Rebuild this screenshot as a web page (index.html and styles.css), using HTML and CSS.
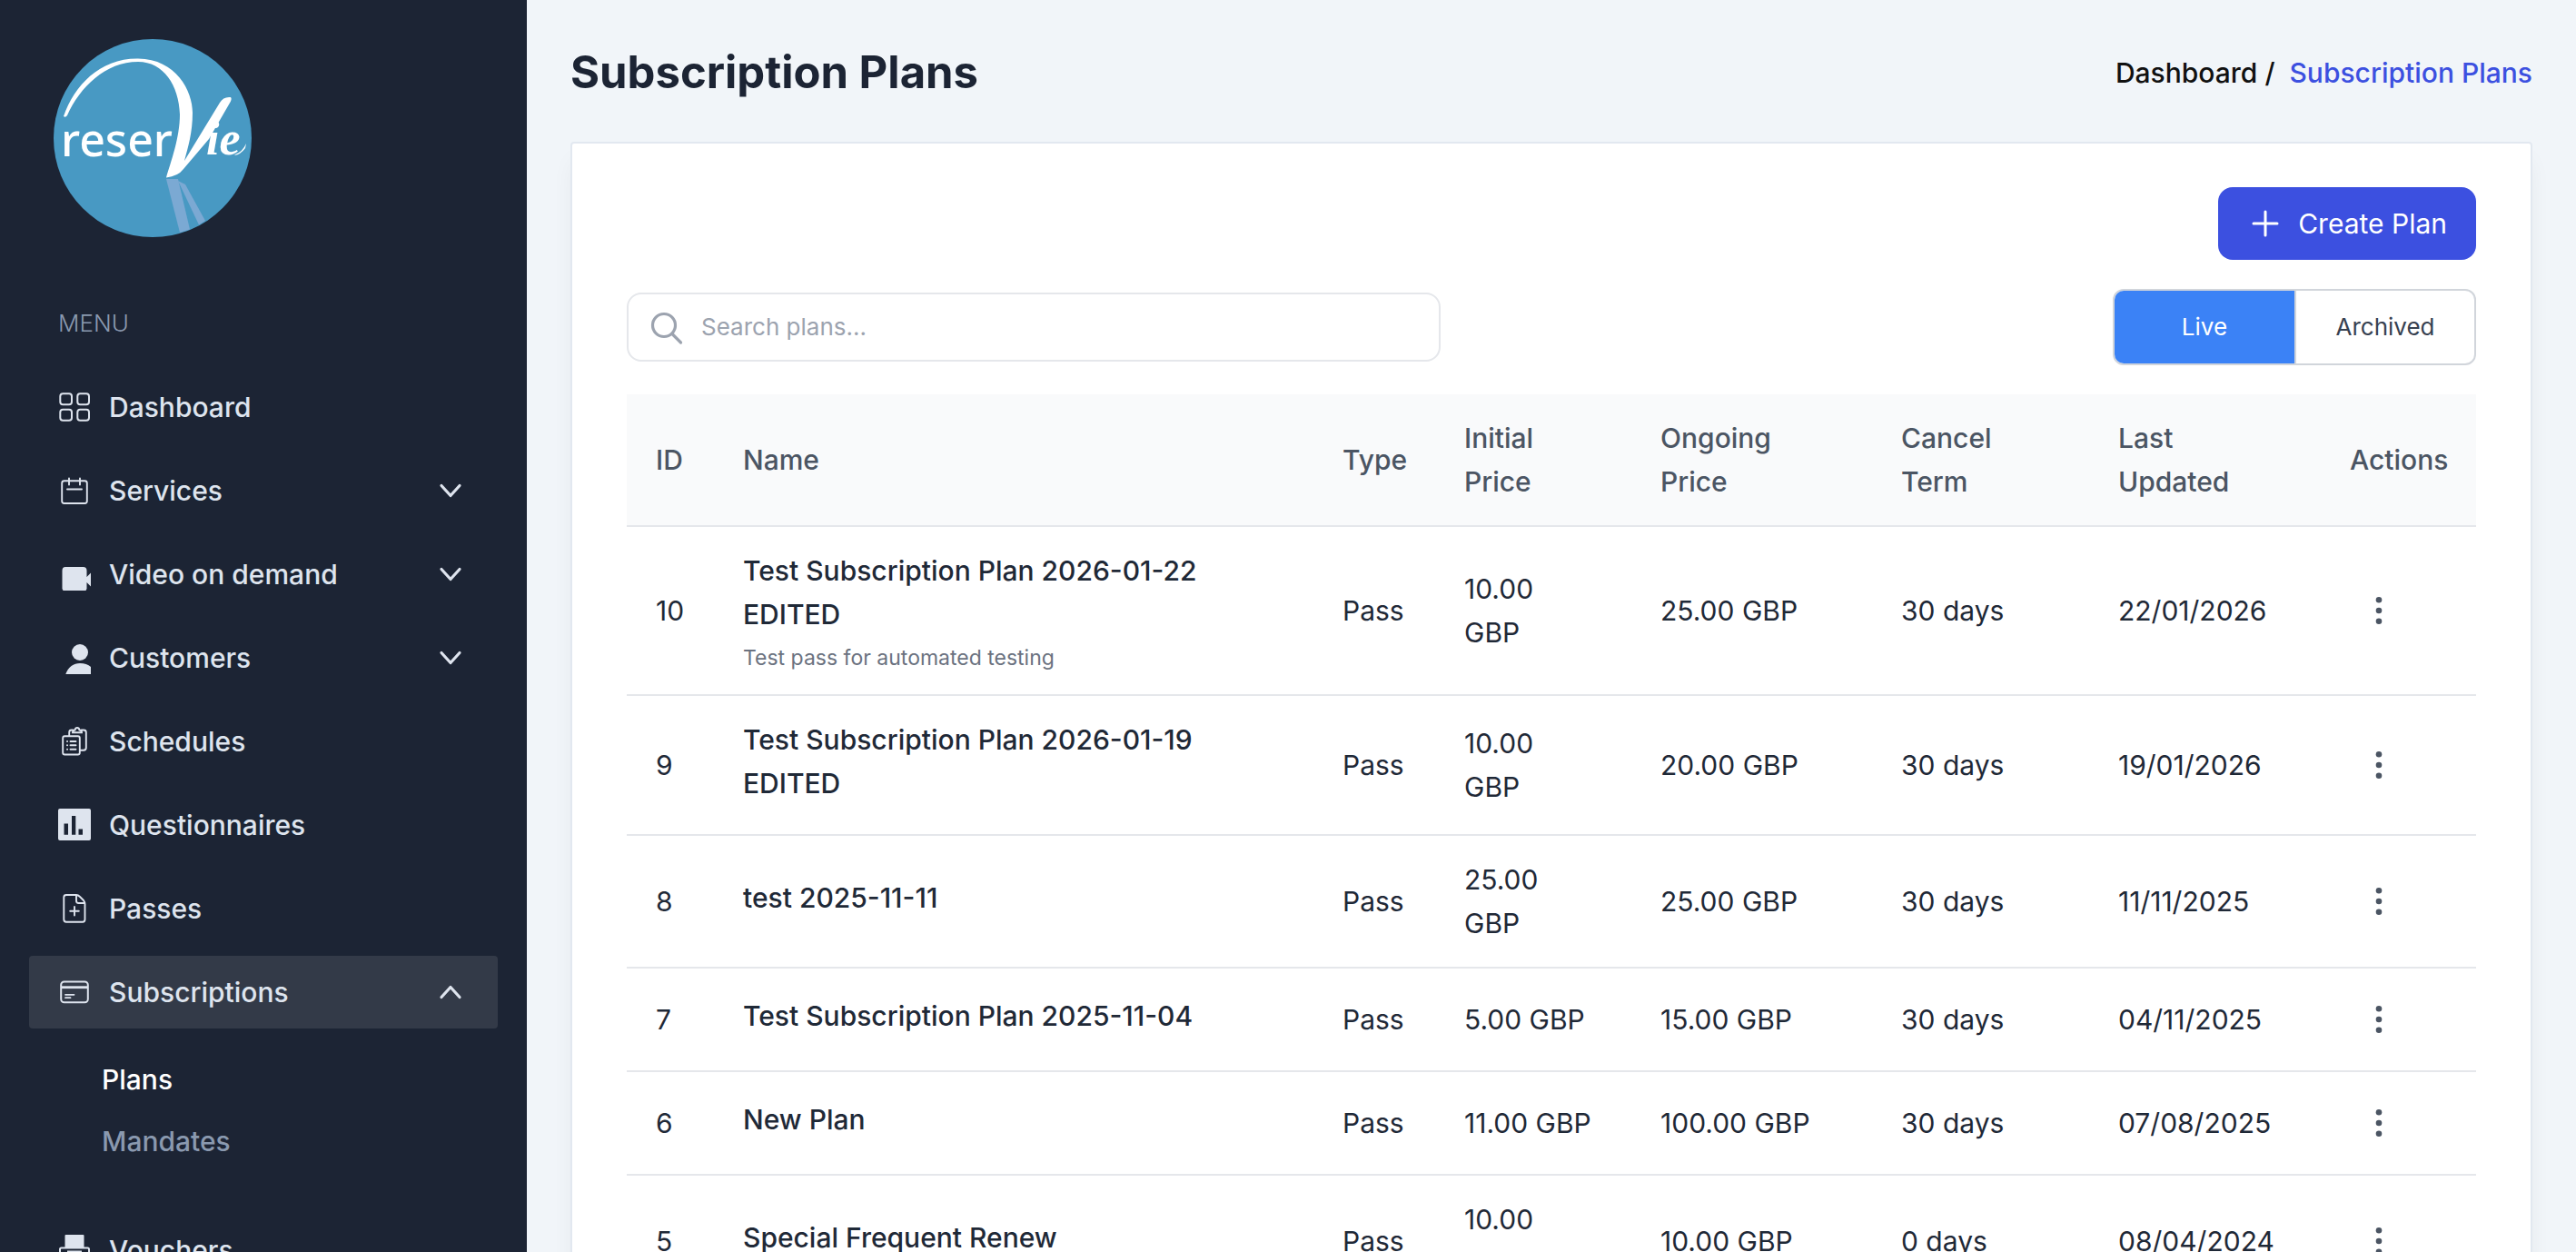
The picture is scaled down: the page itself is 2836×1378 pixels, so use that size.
FILE: index.html
```html
<!DOCTYPE html>
<html lang="en">
<head>
<meta charset="utf-8">
<meta name="viewport" content="width=device-width, initial-scale=1">
<title>Subscription Plans</title>
<link rel="stylesheet" href="styles.css">
</head>
<body>
<svg class="defs" aria-hidden="true">
  <symbol id="chevron" viewBox="0 0 40 40"><path d="M10 14.5 20 25.500 30 14.500" fill="none" stroke="currentColor" stroke-width="3.2" stroke-linecap="round" stroke-linejoin="round"/></symbol>
  <symbol id="dots" viewBox="0 0 40 40"><g fill="currentColor"><circle cx="20" cy="8.300" r="3.300"/><circle cx="20" cy="20" r="3.300"/><circle cx="20" cy="31.700" r="3.300"/></g></symbol>
</svg>
<div class="app">
  <aside class="sidebar">
    <a class="logo" href="#" aria-label="reserVie home">
      <svg viewBox="0 0 224 224">
        <circle cx="112" cy="112" r="109" fill="#4899c3"/>
        <g fill="#7ba9d3">
          <path d="M127 157h13l13 55.500-11 3.500z"/>
          <path d="M140 159l8 4 22 40-7 4.500z"/>
        </g>
        <g fill="#fff">
          <path d="M14 88C26 54 54 24 96 24.500C138 25 156 60 156 84C156 106 151 122 147 137L186 73Q190 66 198 67Q200 69 196 75L174 113L146 146Q140 154 127 155.500C132 138 142 112 142 86C141 54 124 28 96 28C60 28 32 56 18 87Q16 90 14 88Z"/>
          <text class="logo-sans" x="11" y="132">reser</text>
          <text class="logo-script" x="171" y="130">ie</text>
          <path d="M203 130q8-3 12-12l-1 5q-5 7-12 8z"/>
        </g>
      </svg>
    </a>
    <nav class="nav" aria-label="Main">
      <h2 class="nav-heading">MENU</h2>
      <ul class="nav-list">
        <li><a class="nav-item" href="#">
          <svg class="nav-icon" viewBox="0 0 36 36" fill="none" stroke="currentColor" stroke-width="2"><rect x="2.300" y="3.300" width="12.700" height="12" rx="3"/><rect x="21.300" y="3.300" width="12.700" height="12" rx="3"/><rect x="2.300" y="20.700" width="12.700" height="12" rx="3"/><rect x="21.300" y="20.700" width="12.700" height="12" rx="3"/></svg>
          Dashboard</a></li>
        <li><button class="nav-item" type="button">
          <svg class="nav-icon" viewBox="0 0 36 36" fill="none" stroke="currentColor" stroke-width="1.900" stroke-linecap="round"><rect x="4.200" y="7.200" width="27.600" height="24.800" rx="2.500"/><path d="M12 4.500v7M24 4.500v7M10 16.500h16"/></svg>
          Services<svg class="nav-chevron"><use href="#chevron"/></svg></button></li>
        <li><button class="nav-item" type="button">
          <svg class="nav-icon" viewBox="0 0 36 36" fill="currentColor"><path d="M8 10h19.500q4 0 4 4v7l5-5v16l-5-5v7l-1 2h-25l-1-2V14q0-4 3.500-4z"/></svg>
          Video on demand<svg class="nav-chevron"><use href="#chevron"/></svg></button></li>
        <li><button class="nav-item" type="button">
          <svg class="nav-icon" viewBox="0 0 36 36" fill="currentColor"><circle cx="24" cy="12" r="9"/><path d="M8.300 36C11 28 17 24 24 24c5 0 9 1.500 12 4v8z"/></svg>
          Customers<svg class="nav-chevron"><use href="#chevron"/></svg></button></li>
        <li><a class="nav-item" href="#">
          <svg class="nav-icon" viewBox="0 0 36 36" fill="none" stroke="currentColor" stroke-width="1.900" stroke-linecap="round"><rect x="5.200" y="12.200" width="18.600" height="20.300" rx="2"/><path d="M12.200 12V8q0-2.500 2.500-2.500h1.500M25.500 5.500H28q2.800 0 2.800 2.500v17q0 2.700-2.800 2.700h-4M16 8.300q0-2.800 2.500-2.800Q19 3 21 3t2.500 2.500Q26 5.500 26 8.300z"/><path d="M13.500 18h6M13.500 22.300h6M13.500 26.700h6M10 18h.1M10 22.300h.1M10 26.700h.1"/></svg>
          Schedules</a></li>
        <li><a class="nav-item" href="#">
          <svg class="nav-icon" viewBox="0 0 36 36" fill="currentColor" fill-rule="evenodd"><path d="M2 0h32q2 0 2 2v31q0 2-2 2H2q-2 0-2-2V2q0-2 2-2zM6.500 16.500v12.200H11V16.500zM15 8v20.700h4.300V8zM22.500 22.500v6.200H27v-6.200z"/></svg>
          Questionnaires</a></li>
        <li><a class="nav-item" href="#">
          <svg class="nav-icon" viewBox="0 0 36 36" fill="none" stroke="currentColor" stroke-width="1.900" stroke-linecap="round" stroke-linejoin="round"><path d="M9 3h11q2 0 4 2l4 4q1.500 2 1.500 4v17q0 2.700-2.500 2.700H9Q6.300 32.700 6.300 30V5.500Q6.300 3 9 3zM20 3.500v6q0 2.500 2.500 2.500h6.500M18 16v9.500M13.200 20.700h9.600"/></svg>
          Passes</a></li>
        <li><button class="nav-item is-active" type="button" aria-expanded="true">
          <svg class="nav-icon" viewBox="0 0 36 36" fill="none" stroke="currentColor" stroke-width="2" stroke-linecap="round"><rect x="3.200" y="6.400" width="29.600" height="22.800" rx="3.500"/><path d="M4 12.700h28" stroke-width="2.800" stroke-linecap="butt"/><path d="M8 20.800h9.500M8 24.200h5.500" stroke-width="1.800"/></svg>
          Subscriptions<svg class="nav-chevron is-open"><use href="#chevron"/></svg></button>
          <ul class="subnav">
            <li><a class="subnav-link is-current" href="#" aria-current="page">Plans</a></li>
            <li><a class="subnav-link" href="#">Mandates</a></li>
          </ul>
        </li>
        <li><a class="nav-item" href="#">
          <svg class="nav-icon" viewBox="0 0 36 36"><path d="M8.500 1h19q1 0 1 1v13h-21V2q0-1 1-1z" fill="currentColor"/><rect x="2" y="15.500" width="32" height="12" rx="1.500" fill="none" stroke="currentColor" stroke-width="2"/><path d="M10 18.500h16V34H10z" fill="currentColor"/></svg>
          Vouchers</a></li>
      </ul>
    </nav>
  </aside>
  <main class="main">
    <header class="page-header">
      <h1 class="page-title">Subscription Plans</h1>
      <nav class="breadcrumb" aria-label="Breadcrumb">
        <a href="#">Dashboard /</a>
        <a class="is-current" href="#" aria-current="page">Subscription Plans</a>
      </nav>
    </header>
    <section class="card">
      <div class="actions-row">
        <button class="create" type="button">
          <svg class="icon" viewBox="0 0 40 40" fill="none" stroke="currentColor" stroke-width="3" stroke-linecap="round"><path d="M20 7v26M7 20h26"/></svg>
          Create Plan
        </button>
      </div>
      <div class="filter-row">
        <label class="search">
          <svg class="icon" viewBox="0 0 40 40" fill="none" stroke="currentColor" stroke-width="3.200" stroke-linecap="round"><circle cx="15" cy="18" r="12.500"/><path d="M24 27.500l9.500 9.500"/></svg>
          <input type="text" placeholder="Search plans..." aria-label="Search plans">
        </label>
        <div class="toggle" role="group" aria-label="Plan status">
          <button class="toggle-option is-selected" type="button" aria-pressed="true">Live</button>
          <button class="toggle-option" type="button" aria-pressed="false">Archived</button>
        </div>
      </div>
      <table class="plans">
        <colgroup><col class="c-id"><col><col class="c-type"><col class="c-initial"><col class="c-ongoing"><col class="c-term"><col class="c-updated"><col class="c-actions"></colgroup>
        <thead>
          <tr><th>ID</th><th>Name</th><th>Type</th><th>Initial<br>Price</th><th>Ongoing<br>Price</th><th>Cancel<br>Term</th><th>Last<br>Updated</th><th>Actions</th></tr>
        </thead>
        <tbody>
          <tr><td>10</td><td><h3 class="plan-name">Test Subscription Plan 2026-01-22 EDITED</h3><p class="plan-note">Test pass for automated testing</p></td><td>Pass</td><td>10.00<br>GBP</td><td>25.00 GBP</td><td>30 days</td><td>22/01/2026</td><td><button class="menu" type="button" aria-label="Actions for plan 10"><svg class="icon"><use href="#dots"/></svg></button></td></tr>
          <tr><td>9</td><td><h3 class="plan-name">Test Subscription Plan 2026-01-19 EDITED</h3><p class="plan-note"></p></td><td>Pass</td><td>10.00<br>GBP</td><td>20.00 GBP</td><td>30 days</td><td>19/01/2026</td><td><button class="menu" type="button" aria-label="Actions for plan 9"><svg class="icon"><use href="#dots"/></svg></button></td></tr>
          <tr><td>8</td><td><h3 class="plan-name">test 2025-11-11</h3><p class="plan-note"></p></td><td>Pass</td><td>25.00<br>GBP</td><td>25.00 GBP</td><td>30 days</td><td>11/11/2025</td><td><button class="menu" type="button" aria-label="Actions for plan 8"><svg class="icon"><use href="#dots"/></svg></button></td></tr>
          <tr><td>7</td><td><h3 class="plan-name">Test Subscription Plan 2025-11-04</h3><p class="plan-note"></p></td><td>Pass</td><td>5.00 GBP</td><td>15.00 GBP</td><td>30 days</td><td>04/11/2025</td><td><button class="menu" type="button" aria-label="Actions for plan 7"><svg class="icon"><use href="#dots"/></svg></button></td></tr>
          <tr><td>6</td><td><h3 class="plan-name">New Plan</h3><p class="plan-note"></p></td><td>Pass</td><td>11.00 GBP</td><td>100.00 GBP</td><td>30 days</td><td>07/08/2025</td><td><button class="menu" type="button" aria-label="Actions for plan 6"><svg class="icon"><use href="#dots"/></svg></button></td></tr>
          <tr><td>5</td><td><h3 class="plan-name">Special Frequent Renew</h3><p class="plan-note"></p></td><td>Pass</td><td>10.00<br>GBP</td><td>10.00 GBP</td><td>0 days</td><td>08/04/2024</td><td><button class="menu" type="button" aria-label="Actions for plan 5"><svg class="icon"><use href="#dots"/></svg></button></td></tr>
        </tbody>
      </table>
    </section>
  </main>
</div>
</body>
</html>
```
FILE: styles.css
```css
* { box-sizing: border-box; margin: 0; padding: 0; }

body {
  font: 400 30px/48px Inter, "Liberation Sans", sans-serif;
  color: #1f2937;
  background: #f1f5f9;
}

button, input { font: inherit; color: inherit; background: none; border: 0; }
a { color: inherit; text-decoration: none; }
ul { list-style: none; }
svg { display: block; flex: none; }
.defs { position: absolute; width: 0; height: 0; }
.icon { width: 40px; height: 40px; }

.app { display: flex; height: 100vh; }

/* Sidebar */
.sidebar {
  flex: none;
  width: 580px;
  padding: 40px 32px;
  overflow-y: auto;
  scrollbar-width: none;
  color: #dee4ee;
  background: #1c2434;
}
.logo { display: block; width: 224px; margin-left: 24px; }
.logo svg { width: 100%; }
.logo-sans { font: 500 50px "Noto Sans", sans-serif; }
.logo-script { font: italic 700 52px "Liberation Serif", serif; }

.nav { padding-top: 72px; }
.nav-heading {
  margin: 0 32px 32px;
  font-size: 26px;
  font-weight: 300;
  line-height: 40px;
  color: #8a99af;
}
.nav-list { display: flex; flex-direction: column; gap: 12px; }
.nav-item {
  display: flex;
  align-items: center;
  gap: 20px;
  width: 100%;
  padding: 16px 32px;
  border-radius: 4px;
  font-weight: 500;
  text-align: left;
}
.nav-item.is-active { background: #333a48; }
.nav-icon { width: 36px; height: 36px; }
.nav-chevron { width: 40px; height: 40px; margin-left: auto; }
.nav-chevron.is-open { transform: rotate(180deg); }

.subnav {
  display: flex;
  flex-direction: column;
  gap: 20px;
  padding: 32px 0 44px 80px;
  font-weight: 500;
  color: #8a99af;
}
.subnav-link { display: block; }
.subnav-link.is-current { color: #fff; }

/* Page */
.main {
  flex: 1;
  min-width: 0;
  padding: 48px;
  overflow-y: auto;
  scrollbar-width: none;
}
.page-header {
  display: flex;
  align-items: center;
  justify-content: space-between;
  margin-bottom: 44px;
}
.page-title { font-size: 49px; font-weight: 700; line-height: 64px; color: #1c2434; }
.breadcrumb { display: flex; gap: 16px; font-weight: 500; color: #111; }
.breadcrumb .is-current { color: #3c50e0; }

.card {
  padding: 48px 60px;
  border: 2px solid #e2e8f0;
  border-radius: 4px;
  background: #fff;
  box-shadow: 0 16px 26px -6px rgba(0, 0, 0, 0.07);
}
.actions-row { display: flex; justify-content: flex-end; margin-bottom: 32px; }
.create {
  display: flex;
  align-items: center;
  gap: 16px;
  padding: 16px 32px;
  border-radius: 16px;
  color: #fff;
  background: #3c50e0;
}
.filter-row {
  display: flex;
  align-items: center;
  justify-content: space-between;
  margin-bottom: 32px;
  font-size: 26px;
  line-height: 40px;
}
.search {
  display: flex;
  align-items: center;
  gap: 16px;
  width: 100%;
  max-width: 896px;
  padding: 16px 24px;
  border: 2px solid #e5e7eb;
  border-radius: 16px;
  color: #9ca3af;
}
.search input { flex: 1; min-width: 0; height: 40px; outline: 0; color: #1f2937; }
.search input::placeholder { color: #9ca3af; opacity: 1; }
.toggle {
  display: grid;
  grid-template-columns: 1fr 1fr;
  width: 400px;
  overflow: hidden;
  border: 2px solid #d1d5db;
  border-radius: 12px;
  color: #374151;
}
.toggle-option { padding: 20px 32px; }
.toggle-option + .toggle-option { border-left: 2px solid #d1d5db; }
.toggle-option.is-selected { color: #fff; background: #3b82f6; }

/* Plans table */
.plans { width: 100%; table-layout: fixed; border-collapse: separate; border-spacing: 0; }
.c-id { width: 96px; }
.c-type { width: 134px; }
.c-initial { width: 216px; }
.c-ongoing { width: 265px; }
.c-term { width: 239px; }
.c-updated { width: 255px; }
.c-actions { width: 171px; }
.plans th, .plans td {
  padding: 24px 0 24px 32px;
  border-bottom: 2px solid #e5e7eb;
  text-align: left;
  vertical-align: middle;
}
.plans th { font-weight: 500; color: #4b5563; background: #f9fafb; }
.plans td:nth-child(2) { padding-right: 32px; }
.plan-name { font-size: 30px; font-weight: 500; }
.plan-note { margin-top: 8px; font-size: 23px; line-height: 32px; color: #6b7280; }
.menu {
  display: flex;
  align-items: center;
  justify-content: center;
  width: 64px;
  height: 64px;
  color: #4b5563;
}
```
